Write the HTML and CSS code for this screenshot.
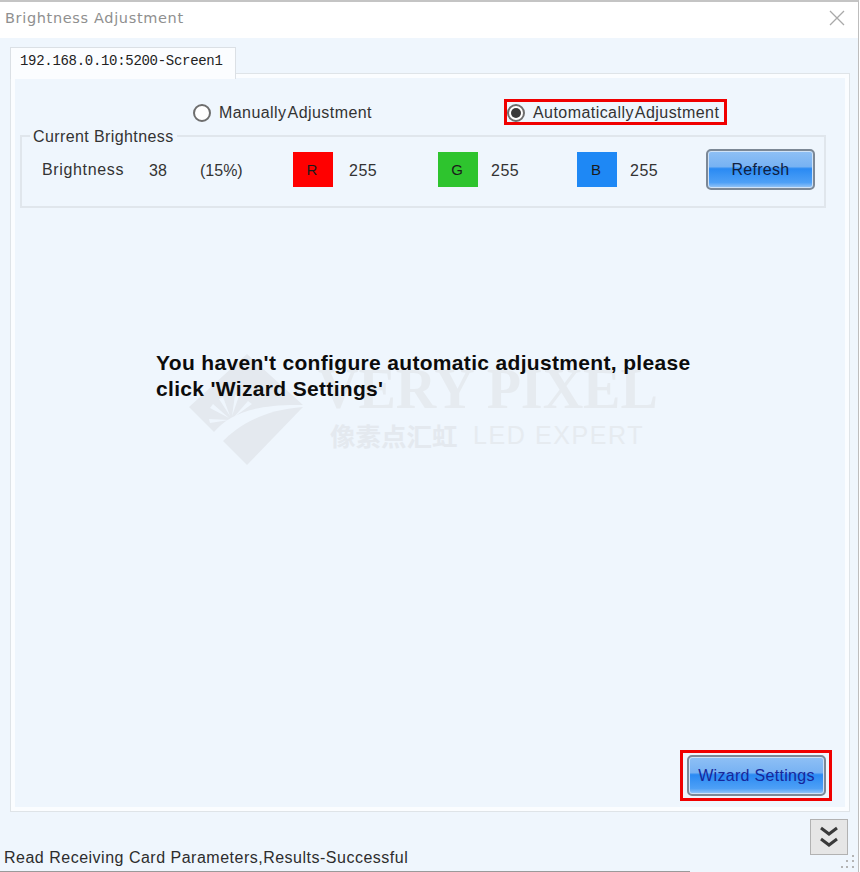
FILE: index.html
```html
<!DOCTYPE html>
<html lang="en">
<head>
<meta charset="UTF-8" />
<meta name="viewport" content="width=device-width, initial-scale=1" />
<title>Brightness Adjustment</title>
<link rel="stylesheet" href="styles.css">
</head>
<body>

<div class="window">
  <header class="titlebar">
    <span class="title">Brightness Adjustment</span>
    <svg class="close" width="16" height="16" viewBox="0 0 16 16"><path d="M1 1 L15 15 M15 1 L1 15" stroke="#a9a9a9" stroke-width="1.3" fill="none"/></svg>
  </header>

  <div class="client">
    <div class="tabs"><div class="tab">192.168.0.10:5200-Screen1</div></div>

    <main class="panel">
      <div class="modes">
        <label class="radio radio-manual"><span class="dot"></span>Manually Adjustment</label>
        <label class="radio radio-auto marked"><span class="dot checked"></span>Automatically Adjustment</label>
      </div>

      <div class="current">
        <span class="legend">Current Brightness</span>
        <span class="lbl">Brightness</span>
        <span class="val val-38">38</span>
        <span class="val val-pct">(15%)</span>
        <span class="swatch red">R</span><span class="val num num-r">255</span>
        <span class="swatch green">G</span><span class="val num num-g">255</span>
        <span class="swatch blue">B</span><span class="val num num-b">255</span>
        <button class="btn btn-refresh">Refresh</button>
      </div>

      <div class="notice">
        <!-- watermark sits behind the message -->
        <div class="watermark">
          <svg class="wm-logo" width="115" height="112" viewBox="0 0 115 112">
            <path d="M58 0 L0 53 L25 78 C40 60 65 50 114 51 Z" fill="#e4e9ef"/>
            <path d="M34 87 C46 75 70 56 114 53 L58 111 Z" fill="#e4e9ef"/>
            <path d="M40 66 L20 65 L21 69 Z M40 64 L24 50 L21 54 Z M41 62 L34 43 L30 45 Z M43 62 L50 42 L46 41 Z M45 63 L63 50 L59 47 Z" fill="#eff6fd"/>
          </svg>
          <div class="wm-text">
            <div class="wm-big">VERY PIXEL</div>
            <div class="wm-small"><span class="wm-cjk">像素点汇虹</span><span class="wm-led">LED EXPERT</span></div>
          </div>
        </div>
        <p class="message">You haven't configure automatic adjustment, please<br>click 'Wizard Settings'</p>
      </div>

      <div class="wizard-row">
        <div class="marked wizard-mark"><button class="btn btn-wizard">Wizard Settings</button></div>
      </div>
    </main>

    <footer class="status">
      <span class="status-text">Read Receiving Card Parameters,Results-Successful</span>
      <button class="collapse">
        <svg width="26" height="26" viewBox="0 0 26 26"><path d="M5 4 L13 10 L21 4 M5 15 L13 21 L21 15" stroke="#3a3a3a" stroke-width="3" fill="none"/></svg>
      </button>
      <svg class="grip" width="16" height="16" viewBox="0 0 16 16" fill="#b4b4b4">
        <rect x="12" y="1" width="2" height="2"/><rect x="6" y="6" width="2" height="2"/><rect x="12" y="6" width="2" height="2"/>
        <rect x="1" y="12" width="2" height="2"/><rect x="6" y="12" width="2" height="2"/><rect x="12" y="12" width="2" height="2"/>
      </svg>
    </footer>
  </div>
</div>

</body>
</html>
```

FILE: styles.css
```css
html, body { margin: 0; padding: 0; }
body { width: 860px; height: 872px; overflow: hidden; background: #fff; font-family: "Liberation Sans", Arial, sans-serif; color: #2b2b2b; }

.window { width: 859px; height: 872px; border-top: 2px solid #c4c4c4; border-right: 1px solid #bdbdbd; box-sizing: border-box; display: flex; flex-direction: column; }

.titlebar { height: 36px; flex: none; background: #fff; display: flex; align-items: center; justify-content: space-between; padding: 0 13px 4px 5px; box-sizing: border-box; }
.title { font-family: "DejaVu Sans", sans-serif; font-size: 14.5px; color: #8f8f8f; letter-spacing: .65px; }

.client { flex: 1; background: #eff6fd; padding: 9px 0 0 10px; display: flex; flex-direction: column; min-height: 0; }

.tabs { height: 27px; flex: none; margin-bottom: -1px; position: relative; z-index: 1; }
.tab { display: inline-block; height: 32px; box-sizing: border-box; background: #fbfdff; border: 1px solid #dbe0e5; border-bottom: none; width: 226px; padding: 5px 0 0 9px; font-family: "Liberation Mono", monospace; font-size: 14px; color: #222; letter-spacing: -.3px; white-space: nowrap; }

.panel { width: 840px; height: 739px; flex: none; box-sizing: border-box; border: 1px solid #dfe4e8; background: #eff6fd; box-shadow: inset 0 0 0 4px #fbfdff; display: flex; flex-direction: column; }

.modes { height: 61px; flex: none; display: flex; padding: 25px 0 0 182px; box-sizing: border-box; }
.radio { display: flex; align-items: center; font-size: 16px; color: #333; height: 26px; padding-top: 1px; box-sizing: border-box; white-space: nowrap; word-spacing: -3px; letter-spacing: .44px; }
.radio-manual { width: 311px; padding-top: 2px; }
.radio-auto { width: 223px; }
.dot { width: 18px; height: 18px; border: 2px solid #6e6e6e; border-radius: 50%; background: #fff; box-sizing: border-box; margin-right: 8px; flex: none; position: relative; }
.dot.checked::after { content: ""; position: absolute; left: 2px; top: 2px; width: 10px; height: 10px; border-radius: 50%; background: #3a3a3a; }

.marked { border: 3px solid #f00000; }

.current { margin-left: 9px; width: 806px; height: 73px; flex: none; box-sizing: border-box; border: 2px solid #e0e6ec; padding: 0 0 4px 20px; display: flex; align-items: center; font-size: 16px; color: #333; position: relative; }
.legend { position: absolute; left: 8px; top: -9px; padding: 0 3px; background: #eff6fd; line-height: 18px; letter-spacing: .4px; white-space: nowrap; }
.lbl { width: 107px; flex: none; letter-spacing: .65px; }
.val { flex: none; margin-top: 3px; }
.val-38 { width: 51px; }
.val-pct { width: 93px; }
.swatch { width: 40px; height: 35px; flex: none; margin-right: 16px; padding-right: 2px; box-sizing: border-box; display: flex; align-items: center; justify-content: center; color: #1b1b1b; font-size: 15px; }
.red { background: #ff0000; }
.green { background: #2ec42e; margin-right: 13px; }
.blue { background: #1e88f5; margin-right: 13px; }
.num { letter-spacing: .5px; }
.num-r { width: 89px; }
.num-g { width: 86px; }
.num-b { width: 76px; }

.btn { border: 2px solid #7c8896; border-radius: 5px; color: #10203f; font-family: "Liberation Sans", Arial, sans-serif; font-size: 16px; padding: 0; background: linear-gradient(to bottom, #8fc0f5 0%, #77b2f3 42%, #2a8af3 48%, #4ea0f6 85%, #9cc8f6 100%); box-shadow: inset 0 0 0 1px #cfe2f7; box-sizing: border-box; letter-spacing: .3px; }
.btn-refresh { width: 109px; height: 41px; flex: none; }
.btn-wizard { width: 139px; height: 41px; color: #17279a; display: block; }

.notice { position: relative; height: 520px; flex: none; }
.message { position: absolute; left: 145px; top: 142px; margin: 0; font-size: 21px; line-height: 26px; font-weight: bold; color: #0c0c0c; white-space: nowrap; letter-spacing: .33px; }
.watermark { position: absolute; left: 178px; top: 146px; display: flex; }
.wm-logo { flex: none; }
.wm-text { margin-left: 14px; margin-top: 5px; }
.wm-big { font-family: "Liberation Serif", serif; font-size: 56px; font-weight: bold; line-height: 60px; color: #e6ebf0; letter-spacing: 0; white-space: nowrap; }
.wm-small { display: flex; align-items: center; margin-left: 12px; }
.wm-cjk { font-family: "Noto Sans CJK SC", sans-serif; font-size: 25.5px; font-weight: 700; line-height: 32px; color: #e4e9ef; width: 143px; white-space: nowrap; }
.wm-led { font-size: 25px; color: #e6ebf0; letter-spacing: 1.6px; white-space: nowrap; }

.wizard-row { flex: 1; display: flex; justify-content: flex-end; padding: 22px 17px 0 0; box-sizing: border-box; }
.wizard-mark { width: 152px; height: 51px; box-sizing: border-box; padding: 2px 0 0 4px; }

.status { flex: 1; position: relative; }
.status::after { content: ""; position: absolute; left: -10px; bottom: 0; width: 690px; height: 1px; background: #9a9a9a; }
.status-text { position: absolute; left: -6px; bottom: 5px; font-size: 16px; letter-spacing: .5px; color: #2d2d2d; white-space: nowrap; }
.collapse { position: absolute; left: 800px; top: 7px; width: 38px; height: 36px; padding: 0; background: #e6e6e6; border: 1px solid #b2b2b2; display: flex; align-items: center; justify-content: center; box-sizing: border-box; }
.grip { position: absolute; left: 830px; bottom: 2px; }
```
